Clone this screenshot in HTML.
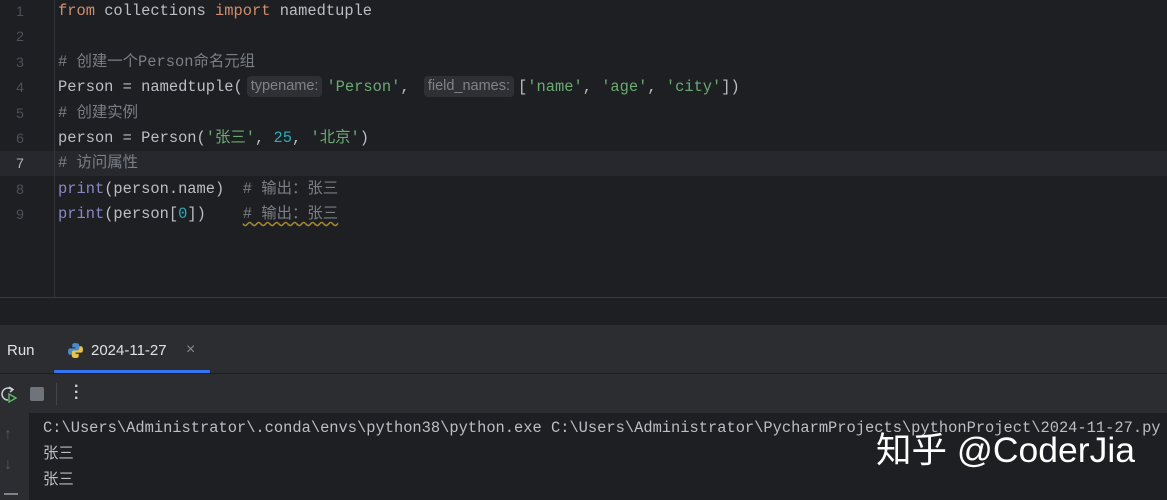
<!DOCTYPE html>
<html><head><meta charset="utf-8"><style>
*{margin:0;padding:0;box-sizing:border-box}
body{width:1167px;height:500px;overflow:hidden;background:#1e1f22;position:relative;font-family:"Liberation Mono","Noto Sans CJK SC",monospace;font-size:15.4px;color:#bcbec4}
.ln{position:absolute;left:0;width:40px;height:25.4px;line-height:25.4px;text-align:center;color:#4b5059;font-size:14px;font-family:"Liberation Sans",sans-serif}
.cl{position:absolute;left:58px;height:25.4px;line-height:25.4px;white-space:pre}
.k{color:#cf8e6d}.c{color:#7a7e85}.s{color:#6aab73}.n{color:#2aacb8}.f{color:#8888c6}
.h{display:inline-block;background:#2e3034;color:#7f828a;font-family:"Liberation Sans",sans-serif;font-size:14.5px;line-height:21px;padding:0 4px;border-radius:4px;vertical-align:1px;margin:0 4px}
.sq{text-decoration:underline wavy #a68a32;text-underline-offset:3px}
</style></head><body>
<div style="position:absolute;left:0;top:151px;width:1167px;height:25px;background:#26282e"></div>
<div style="position:absolute;left:54px;top:0;width:1px;height:297px;background:#313438"></div>
<div style="position:absolute;left:0;top:297px;width:1167px;height:1px;background:#393b40"></div>

<div class="ln" style="top:-1px">1</div><div class="cl" style="top:-1px"><span class="k">from</span> collections <span class="k">import</span> namedtuple</div>
<div class="ln" style="top:24.4px">2</div>
<div class="ln" style="top:49.8px">3</div><div class="cl c" style="top:49.8px"># 创建一个Person命名元组</div>
<div class="ln" style="top:75.2px">4</div><div class="cl" style="top:75.2px">Person = namedtuple(<span class="h">typename:</span><span class="s">'Person'</span>, <span class="h" style="margin-left:5px">field_names:</span>[<span class="s">'name'</span>, <span class="s">'age'</span>, <span class="s">'city'</span>])</div>
<div class="ln" style="top:100.6px">5</div><div class="cl c" style="top:100.6px"># 创建实例</div>
<div class="ln" style="top:126px">6</div><div class="cl" style="top:126px">person = Person(<span class="s">'张三'</span>, <span class="n">25</span>, <span class="s">'北京'</span>)</div>
<div class="ln" style="top:151.4px;color:#b0b3b8">7</div><div class="cl c" style="top:151.4px"># 访问属性</div>
<div class="ln" style="top:176.8px">8</div><div class="cl" style="top:176.8px"><span class="f">print</span>(person.name)  <span class="c"># 输出：张三</span></div>
<div class="ln" style="top:202.2px">9</div><div class="cl" style="top:202.2px"><span class="f">print</span>(person[<span class="n">0</span>])    <span class="c sq"># 输出：张三</span></div>

<div style="position:absolute;left:0;top:325px;width:1167px;height:88px;background:#2b2d30;font-family:'Liberation Sans',sans-serif">
<div style="position:absolute;left:7px;top:17px;font-size:15px;color:#dfe1e5">Run</div>
<svg style="position:absolute;left:67px;top:17px" width="17" height="17" viewBox="0 0 16 16"><path d="M8 1c-3 0-3 1-3 2v2h3v1H3c-1.5 0-2 1-2 3s.6 3 2 3h1.5v-2c0-1.3 1-2 2.3-2h3c1 0 1.7-.7 1.7-1.7V3c0-1-1-2-3.5-2z" fill="#4a8bc9"/><path d="M8 15c3 0 3-1 3-2v-2H8v-1h5c1.5 0 2-1 2-3s-.6-3-2-3h-1.5v2c0 1.3-1 2-2.3 2h-3C5.2 8 4.5 8.7 4.5 9.7V13c0 1 1 2 3.5 2z" fill="#e8c34a"/></svg>
<div style="position:absolute;left:91px;top:17px;font-size:15px;color:#dfe1e5">2024-11-27</div>
<div style="position:absolute;left:186px;top:16px;font-size:16px;color:#868a91">×</div>
<div style="position:absolute;left:54px;top:45px;width:156px;height:3px;background:#3574f0;border-radius:1px"></div>
<div style="position:absolute;left:0;top:48px;width:1167px;height:1px;background:#1e1f22"></div>
<svg style="position:absolute;left:0;top:60px" width="18" height="18" viewBox="0 0 18 18"><path d="M12 4.5A6 6 0 1 0 8 15" stroke="#ced0d6" stroke-width="1.5" fill="none"/><path d="M9 2l4 2.5-3 2.5" stroke="#ced0d6" stroke-width="1.5" fill="none"/><path d="M9 9l7 4-7 4z" stroke="#5fb865" stroke-width="1.4" fill="none"/></svg>
<div style="position:absolute;left:30px;top:62px;width:14px;height:14px;background:#6f737a;border-radius:2px"></div>
<div style="position:absolute;left:56px;top:58px;width:1px;height:22px;background:#43454a"></div>
<div style="position:absolute;left:74px;top:59px;font-size:16px;color:#ced0d6;font-weight:bold;line-height:6px">·<br>·<br>·</div>
</div>
<div style="position:absolute;left:0;top:413px;width:29px;height:87px;background:#2b2d30"></div>
<div style="position:absolute;left:4px;top:426px;color:#55585e;font-size:16px;font-family:'Liberation Sans',sans-serif">↑</div>
<div style="position:absolute;left:4px;top:456px;color:#55585e;font-size:16px;font-family:'Liberation Sans',sans-serif">↓</div>
<div style="position:absolute;left:4px;top:493px;width:14px;height:2px;background:#80838a"></div>
<div style="position:absolute;left:43px;top:416px;line-height:25.8px;white-space:pre;color:#bcbec4">C:\Users\Administrator\.conda\envs\python38\python.exe C:\Users\Administrator\PycharmProjects\pythonProject\2024-11-27.py
张三
张三</div>
<div style="position:absolute;left:876px;top:426px;font-family:'Liberation Sans','Noto Sans CJK SC',sans-serif;font-size:35.5px;color:#fff;white-space:nowrap;line-height:48px">知乎 @CoderJia</div>
</body></html>
